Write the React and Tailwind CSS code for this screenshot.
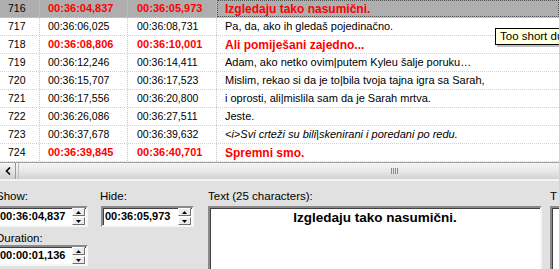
import React from 'react';

const rows = [
  { n: 716, show: '00:36:04,837', hide: '00:36:05,973', text: 'Izgledaju tako nasumični.', red: true, selected: true },
  { n: 717, show: '00:36:06,025', hide: '00:36:08,731', text: 'Pa, da, ako ih gledaš pojedinačno.' },
  { n: 718, show: '00:36:08,806', hide: '00:36:10,001', text: 'Ali pomiješani zajedno...', red: true },
  { n: 719, show: '00:36:12,246', hide: '00:36:14,411', text: 'Adam, ako netko ovim|putem Kyleu šalje poruku…' },
  { n: 720, show: '00:36:15,707', hide: '00:36:17,523', text: 'Mislim, rekao si da je to|bila tvoja tajna igra sa Sarah,' },
  { n: 721, show: '00:36:17,556', hide: '00:36:20,800', text: 'i oprosti, ali|mislila sam da je Sarah mrtva.' },
  { n: 722, show: '00:36:26,086', hide: '00:36:27,511', text: 'Jeste.' },
  { n: 723, show: '00:36:37,678', hide: '00:36:39,632', text: '<i>Svi crteži su bili|skenirani i poredani po redu.', italic: true },
  { n: 724, show: '00:36:39,845', hide: '00:36:40,701', text: 'Spremni smo.', red: true },
];

const cell = 'h-full flex items-center whitespace-nowrap overflow-hidden border-r border-dotted border-[#c8c8c8]';

// tiny up/down buttons inside the time boxes
const Spinner = () => (
  <div className="flex flex-col gap-[1px] mr-[1px]">
    {['up', 'down'].map((d) => (
      <div
        key={d}
        className="w-[13px] h-[8px] bg-[#ececec] border border-t-white border-l-white border-r-[#707070] border-b-[#707070] flex items-center justify-center"
      >
        <svg width="5" height="3" viewBox="0 0 5 3">
          {d === 'up' ? <path d="M2.5 0 L5 3 L0 3 Z" fill="#000" /> : <path d="M0 0 L5 0 L2.5 3 Z" fill="#000" />}
        </svg>
      </div>
    ))}
  </div>
);

const TimeBox = ({ value, className = '' }) => (
  <div
    className={`h-[21px] w-[92px] bg-white flex items-center justify-between border-2 border-t-[#8a8a8a] border-l-[#8a8a8a] border-r-[#f6f6f6] border-b-[#f6f6f6] shadow-[inset_1px_1px_0_#404040] ${className}`}
  >
    <span className="pl-[2px] text-[11px] font-bold text-black leading-none">{value}</span>
    <Spinner />
  </div>
);

const App = () => {
  return (
    <div className="relative w-[559px] h-[269px] overflow-hidden bg-[#e1e1e1] font-['Liberation_Sans',sans-serif] text-black">
      {/* subtitle grid */}
      <div className="bg-white">
        {rows.map((r) => (
          <div
            key={r.n}
            className={`grid grid-cols-[40px_88px_89px_1fr] h-[18px] border-b border-dotted border-[#d2d2d2] ${r.selected ? 'bg-[#aeaeae]' : ''}`}
          >
            <div className={`${cell} pl-2 text-[10.5px]`}>{r.n}</div>
            <div className={`${cell} pl-2 ${r.red ? 'text-[11px] font-bold text-[#ff0000]' : 'text-[10.5px]'}`}>{r.show}</div>
            <div className={`${cell} pl-[9px] ${r.red ? 'text-[11px] font-bold text-[#ff0000]' : 'text-[10.5px]'}`}>{r.hide}</div>
            <div
              className={`h-full flex items-center whitespace-nowrap overflow-hidden pl-2 ${
                r.red ? 'text-[12px] font-bold text-[#ff0000]' : 'text-[11px]'
              } ${r.italic ? 'italic' : ''} ${r.selected ? 'border border-dotted border-[#505050] pl-[7px]' : ''}`}
            >
              {r.text}
            </div>
          </div>
        ))}
      </div>

      {/* horizontal scrollbar */}
      <div className="flex h-[17px] border-t border-[#a0a0a0] bg-gradient-to-b from-[#fbfbfb] to-[#d6d6d6]">
        <div className="w-[16px] h-full flex items-center justify-center border-r border-[#9a9a9a] bg-gradient-to-b from-[#f6f6f6] to-[#d0d0d0]">
          <svg width="6" height="8" viewBox="0 0 6 8">
            <path d="M5 0.5 L1.5 4 L5 7.5" stroke="#000" strokeWidth="1.6" fill="none" />
          </svg>
        </div>
        <div className="flex-1 ml-[2px] flex items-center pl-[372px] border-l border-[#bdbdbd] bg-gradient-to-b from-[#f4f4f4] via-[#e8e8e8] to-[#d2d2d2]">
          <div className="flex gap-[1px]">
            {[0, 1, 2, 3].map((i) => (
              <div key={i} className="w-[1px] h-[6px] bg-[#8a8a8a]" />
            ))}
          </div>
        </div>
      </div>
      <div className="h-[2px] bg-[#f3f3f3]" />

      {/* edit panel */}
      <div className="flex pt-2 text-[11.5px] leading-[14px]">
        <div className="flex flex-col shrink-0 ml-[-4px] w-[92px]">
          <span>Show:</span>
          <TimeBox value="00:36:04,837" className="mt-[3px]" />
          <span className="mt-[4px]">Duration:</span>
          <TimeBox value="00:00:01,136" />
        </div>
        <div className="flex flex-col shrink-0 ml-[13px] w-[93px]">
          <span className="ml-[-1px]">Hide:</span>
          <TimeBox value="00:36:05,973" className="mt-[3px] w-[93px]" />
        </div>
        <div className="flex flex-col shrink-0 ml-[14px] w-[334px]">
          <span>Text (25 characters):</span>
          <div className="mt-[3px] h-[70px] bg-white border-2 border-t-[#8a8a8a] border-l-[#8a8a8a] border-r-[#f6f6f6] border-b-[#f6f6f6] shadow-[inset_1px_1px_0_#404040] pt-[2px] text-center text-[13.5px] leading-[16px] font-bold">
            Izgledaju tako nasumični.
          </div>
        </div>
        <div className="flex flex-col shrink-0 ml-[8px] w-[40px]">
          <span>T</span>
          <div className="mt-[3px] h-[70px] bg-white border-2 border-t-[#8a8a8a] border-l-[#8a8a8a] border-r-[#f6f6f6] border-b-[#f6f6f6] shadow-[inset_1px_1px_0_#404040]" />
        </div>
      </div>

      {/* tooltip */}
      <div className="absolute left-[495px] top-[28px] h-[17px] pl-[4px] pr-2 flex items-center whitespace-nowrap bg-[#ffffe1] border border-black shadow-[2px_2px_0_rgba(0,0,0,0.25)] text-[11.5px]">
        Too short duration
      </div>
    </div>
  );
};

export default App;
